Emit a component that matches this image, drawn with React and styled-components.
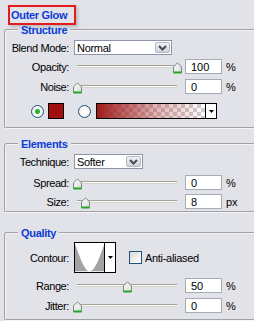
import React from 'react'
import styled, { createGlobalStyle } from 'styled-components'

const GlobalStyle = createGlobalStyle`
  html, body {
    margin: 0;
    padding: 0;
  }

  body {
    width: 254px;
    height: 321px;
    overflow: hidden;
    background: #e2e2e9;
    font-family: "Liberation Sans", Arial, sans-serif;
    font-size: 11px;
    color: #000;
  }
`

const Panel = styled.div`
  width: 254px;
  padding-top: 5px;
`

const Title = styled.div`
  margin-left: 8px;
  width: 68px;
  height: 20px;
  box-sizing: border-box;
  padding-left: 1px;
  display: flex;
  align-items: center;
  border: 2px solid #e41b1b;
  box-shadow: 2px 2px 3px rgba(0, 0, 0, 0.18);
  color: #0a3cd6;
  font-weight: bold;
  letter-spacing: -0.3px;
  white-space: nowrap;
`

const Group = styled.fieldset`
  margin: ${(p) => p.$top}px -12px 0 4px;
  padding: 0 0 ${(p) => p.$bottom}px 0;
  min-width: 0;
  border: 2px groove #f4f4f8;
  border-radius: 3px;
`

const Legend = styled.legend`
  margin-left: 12px;
  padding: 0 3px;
  line-height: 10px;
  color: #0a3cd6;
  font-weight: bold;
  letter-spacing: -0.3px;
`

const Row = styled.div`
  display: flex;
  align-items: center;
  height: ${(p) => p.$h || 15}px;
  margin-top: ${(p) => p.$mt}px;
  padding-left: ${(p) => p.$indent || 0}px;
`

const Label = styled.span`
  width: 63px;
  margin-right: ${(p) => p.$gap}px;
  text-align: right;
  letter-spacing: -0.4px;
  white-space: nowrap;
`

const SliderBox = styled.div`
  position: relative;
  width: 108px;
  height: 15px;
  margin-right: 4px;
  display: flex;
  align-items: center;
`

const Track = styled.div`
  flex: 1;
  margin: 0 4px;
  height: 3px;
  box-sizing: border-box;
  border-top: 1px solid #a2a29a;
  border-bottom: 1px solid #d4d4ca;
  background: #fbfbf3;
`

const Thumb = styled.svg`
  position: absolute;
  top: 3px;
  width: 9px;
  height: 12px;
`

const Field = styled.div`
  width: 37px;
  height: 15px;
  box-sizing: border-box;
  margin-right: 4px;
  padding-left: 5px;
  display: flex;
  align-items: center;
  border: 1px solid #a5acb8;
  background: #fff;
`

const Unit = styled.span`
  letter-spacing: -0.2px;
`

const Select = styled.div`
  width: ${(p) => p.$w}px;
  height: 15px;
  box-sizing: border-box;
  padding: 0 1px 0 2px;
  display: flex;
  align-items: center;
  justify-content: space-between;
  border: 1px solid #8d96a8;
  background: #fff;
  letter-spacing: -0.3px;
`

const SelectButton = styled.div`
  width: 15px;
  height: 11px;
  box-sizing: border-box;
  display: flex;
  align-items: center;
  justify-content: center;
  border: 1px solid #b3b9c8;
  border-radius: 2px;
  background: linear-gradient(#f0f1f6, #cfd3de);
`

const Radio = styled.span`
  width: 13px;
  height: 13px;
  box-sizing: border-box;
  border-radius: 50%;
  border: 1px solid #1c5180;
  background: ${(p) =>
    p.$on
      ? 'radial-gradient(circle, #2bb52b 0 2px, #8fd88f 2.6px, #fff 3px, #e6e6e0 100%)'
      : 'radial-gradient(circle, #fff 0 3px, #e2e2dc 100%)'};
  margin-right: ${(p) => p.$gap}px;
`

const Swatch = styled.span`
  width: 16px;
  height: 16px;
  box-sizing: border-box;
  margin-right: 14px;
  border: 1px solid #000;
  background: #a20f0f;
`

const GradientPicker = styled.div`
  width: 121px;
  height: 16px;
  box-sizing: border-box;
  display: flex;
  border: 1px solid #000;
  background: #fff;
`

const GradientStrip = styled.div`
  flex: 1;
  background:
    linear-gradient(to right, rgba(160, 28, 28, 1), rgba(170, 40, 40, 0.35) 55%, rgba(200, 80, 80, 0)),
    repeating-conic-gradient(#cfcfcf 0 25%, #ffffff 0 50%) 0 0 / 8px 8px;
`

const DropArea = styled.div`
  width: 10px;
  display: flex;
  align-items: center;
  justify-content: center;
  border-left: 1px solid #000;
  background: #fff;
`

const ContourPicker = styled.div`
  width: 42px;
  height: 31px;
  box-sizing: border-box;
  margin-right: 13px;
  display: flex;
  border: 1px solid #000;
  background: #fff;
`

const ContourGraph = styled.svg`
  width: 31px;
  height: 29px;
  display: block;
`

const Check = styled.span`
  width: 13px;
  height: 13px;
  box-sizing: border-box;
  margin-right: 3px;
  border: 1px solid #1c5180;
  background: linear-gradient(135deg, #dcdcd4, #ffffff);
`

const CheckLabel = styled.span`
  letter-spacing: -0.3px;
  white-space: nowrap;
`

const Chevron = () => (
  <svg width="9" height="6" viewBox="0 0 9 6">
    <path d="M1 1 L4.5 4.5 L8 1" fill="none" stroke="#4a4a52" strokeWidth="2" />
  </svg>
)

const DownTriangle = () => (
  <svg width="5" height="3" viewBox="0 0 5 3">
    <path d="M0 0 H5 L2.5 3 Z" fill="#000" />
  </svg>
)

const Slider = ({ value }) => (
  <SliderBox>
    <Track />
    <Thumb viewBox="0 0 9 12" style={{ left: `${4 + value - 4.5}px` }}>
      <defs>
        <linearGradient id="thumbFill" x1="0" y1="0" x2="1" y2="1">
          <stop offset="0" stopColor="#ffffff" />
          <stop offset="1" stopColor="#d6dcd6" />
        </linearGradient>
      </defs>
      <path d="M0.5 5 L4.5 0.8 L8.5 5 V10.5 H0.5 Z" fill="url(#thumbFill)" stroke="#7d8a80" />
      <rect x="0.5" y="9.5" width="8" height="2" fill="#22a62a" />
    </Thumb>
  </SliderBox>
)

const SliderRow = ({ label, value, text, unit, mt }) => (
  <Row $mt={mt}>
    <Label $gap={4}>{label}</Label>
    <Slider value={value} />
    <Field>{text}</Field>
    <Unit>{unit}</Unit>
  </Row>
)

const Dropdown = ({ width, children }) => (
  <Select $w={width}>
    <span>{children}</span>
    <SelectButton>
      <Chevron />
    </SelectButton>
  </Select>
)

export default function App() {
  return (
    <Panel>
      <GlobalStyle />
      <Title>Outer Glow</Title>

      <Group $top={0} $bottom={8}>
        <Legend>Structure</Legend>
        <Row $mt={5}>
          <Label $gap={5}>Blend Mode:</Label>
          <Dropdown width={98}>Normal</Dropdown>
        </Row>
        <SliderRow label="Opacity:" value={100} text="100" unit="%" mt={4} />
        <SliderRow label="Noise:" value={0} text="0" unit="%" mt={5} />
        <Row $mt={9} $h={16} $indent={25}>
          <Radio $on $gap={4} />
          <Swatch />
          <Radio $gap={5} />
          <GradientPicker>
            <GradientStrip />
            <DropArea>
              <DownTriangle />
            </DropArea>
          </GradientPicker>
        </Row>
      </Group>

      <Group $top={10} $bottom={2}>
        <Legend>Elements</Legend>
        <Row $mt={5}>
          <Label $gap={5}>Technique:</Label>
          <Dropdown width={69}>Softer</Dropdown>
        </Row>
        <SliderRow label="Spread:" value={0} text="0" unit="%" mt={6} />
        <SliderRow label="Size:" value={8} text="8" unit="px" mt={4} />
      </Group>

      <Group $top={15} $bottom={6}>
        <Legend>Quality</Legend>
        <Row $mt={4} $h={31}>
          <Label $gap={5}>Contour:</Label>
          <ContourPicker>
            <ContourGraph viewBox="0 0 31 29">
              <path d="M0 0 C5 14 10 29 15.5 29 C21 29 26 14 31 0 V29 H0 Z" fill="#a3a3a6" />
            </ContourGraph>
            <DropArea>
              <DownTriangle />
            </DropArea>
          </ContourPicker>
          <Check />
          <CheckLabel>Anti-aliased</CheckLabel>
        </Row>
        <SliderRow label="Range:" value={50} text="50" unit="%" mt={5} />
        <SliderRow label="Jitter:" value={0} text="0" unit="%" mt={5} />
      </Group>
    </Panel>
  )
}
